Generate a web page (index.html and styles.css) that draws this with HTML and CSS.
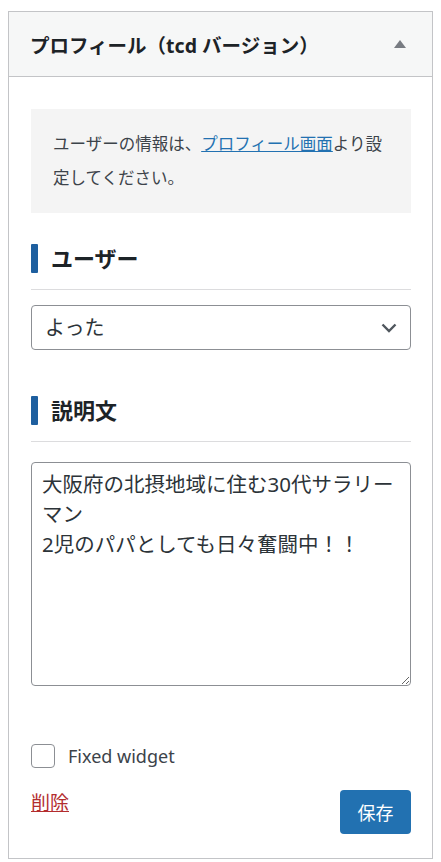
FILE: index.html
```html
<!DOCTYPE html>
<html lang="ja">
<head>
    <meta charset="UTF-8">
    <meta name="viewport" content="width=device-width, initial-scale=1.0">
    <title>プロフィール（tcd バージョン）</title>
    <link rel="stylesheet" href="styles.css">
</head>
<body>

    <div class="widget">
        <!-- Header -->
        <div class="widget-top">
            <h3 class="widget-title">プロフィール（tcd バージョン）</h3>
            <span class="toggle-arrow"></span>
        </div>

        <div class="widget-inside">
            <!-- Info -->
            <div class="info-box">
                ユーザーの情報は、<a href="#">プロフィール画面</a>より設定してください。
            </div>

            <!-- User -->
            <h4 class="field-title">ユーザー</h4>
            <select class="user-select">
                <option>よった</option>
            </select>

            <!-- Description -->
            <h4 class="field-title">説明文</h4>
            <textarea class="desc" rows="7">大阪府の北摂地域に住む30代サラリーマン
2児のパパとしても日々奮闘中！！</textarea>

            <label class="fixed">
                <input type="checkbox">
                <span>Fixed widget</span>
            </label>

            <div class="actions">
                <a href="#" class="delete">削除</a>
                <button class="save">保存</button>
            </div>
        </div>
    </div>

</body>
</html>
```

FILE: styles.css
```css
body {
    font-family: "Noto Sans", "Noto Sans CJK JP", sans-serif;
    margin: 11px 8px 0;
    background-color: #fff;
    color: #3c434a;
}
.widget {
    border: 1px solid #c3c4c7;
    background-color: #fff;
    height: 848px;
    box-sizing: border-box;
}
.widget-top {
    display: flex;
    align-items: center;
    justify-content: space-between;
    height: 64px;
    padding: 0 26px 0 21px;
    background-color: #f6f7f7;
    border-bottom: 1px solid #c3c4c7;
}
.widget-title {
    margin: 0;
    font-size: 19.5px;
    font-weight: 700;
    color: #1d2327;
}
.toggle-arrow {
    width: 0;
    height: 0;
    border-left: 6px solid transparent;
    border-right: 6px solid transparent;
    border-bottom: 8px solid #787c82;
}
.widget-inside {
    padding: 32px 21px 0 22px;
}
.info-box {
    background-color: #f4f4f4;
    padding: 18px 22px;
    font-size: 16.5px;
    line-height: 34px;
    color: #3c434a;
}
.info-box a {
    color: #2271b1;
}
.field-title {
    margin: 31px 0 15px;
    padding: 0 0 16px;
    border-bottom: 1px solid #dcdcde;
    font-size: 22px;
    font-weight: 700;
    color: #1d2327;
    display: flex;
    align-items: center;
    gap: 13px;
    line-height: 29px;
}
.field-title::before {
    content: "";
    width: 7px;
    height: 29px;
    border-radius: 1px;
    background-color: #1e5f9f;
}
.user-select {
    display: block;
    width: 100%;
    height: 45px;
    padding: 0 40px 0 13px;
    font-family: inherit;
    font-size: 20px;
    color: #2c3338;
    border: 1px solid #8c8f94;
    border-radius: 4px;
    background: #fff url("data:image/svg+xml,%3Csvg xmlns='http://www.w3.org/2000/svg' width='16' height='10' viewBox='0 0 16 10'%3E%3Cpath d='M1.5 1.5 8 8l6.5-6.5' fill='none' stroke='%2350575e' stroke-width='2.4'/%3E%3C/svg%3E") no-repeat right 13px center;
    -webkit-appearance: none;
    appearance: none;
    margin-bottom: 46px;
}
.desc {
    display: block;
    width: 100%;
    height: 224px;
    box-sizing: border-box;
    margin-top: 20px;
    padding: 6px 4px 6px 10px;
    font-family: "Noto Sans", "Noto Sans CJK JP", sans-serif;
    font-size: 20.5px;
    line-height: 30px;
    color: #2c3338;
    border: 1px solid #8c8f94;
    border-radius: 4px;
    resize: vertical;
}
.fixed {
    display: flex;
    align-items: center;
    gap: 13px;
    margin-top: 58px;
    font-size: 18px;
    color: #3c434a;
}
.fixed input {
    -webkit-appearance: none;
    appearance: none;
    width: 24px;
    height: 24px;
    margin: 0;
    border: 1px solid #8c8f94;
    border-radius: 4px;
    background-color: #fff;
}
.actions {
    display: flex;
    justify-content: space-between;
    align-items: flex-start;
    margin-top: 22px;
}
.delete {
    color: #b32d2e;
    font-size: 19px;
    line-height: 26px;
}
.save {
    width: 71px;
    height: 44px;
    border: none;
    border-radius: 4px;
    background-color: #2271b1;
    color: #fff;
    font-family: inherit;
    font-size: 18px;
}
```
